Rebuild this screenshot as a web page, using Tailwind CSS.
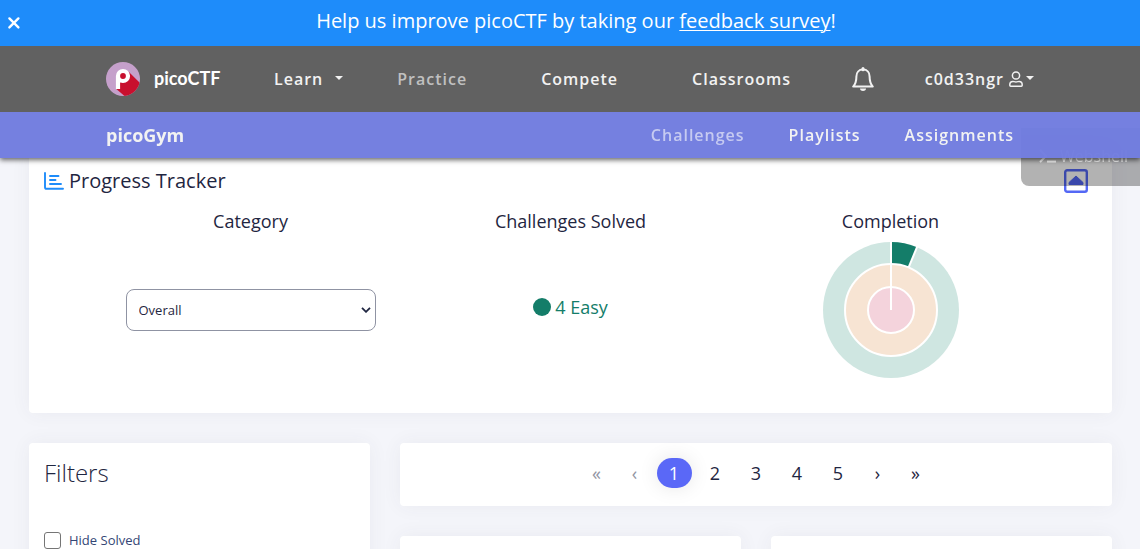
<!DOCTYPE html>
<html lang="en">
<head>
<meta charset="utf-8">
<meta name="viewport" content="width=device-width, initial-scale=1">
<title>picoGym - picoCTF</title>
<script src="https://cdn.jsdelivr.net/npm/@tailwindcss/browser@4"></script>
</head>
<body class="h-screen overflow-hidden bg-[#f4f5fa] font-['Open_Sans',sans-serif] text-[#1f2641]">

<header class="relative z-20 shadow-[0_2px_5px_rgba(0,0,0,0.6)]">
  <div class="relative flex h-[46px] items-center justify-center bg-[#1e8cfa] pb-1 pl-3 text-xl text-white">
    <button type="button" aria-label="Close" class="absolute top-4 left-[7px] size-[14px]">
      <svg viewBox="0 0 14 14" class="size-[14px]" fill="none" stroke="#fff" stroke-width="2.4" stroke-linecap="round"><path d="M2.4 2.4l9 9M11.4 2.4l-9 9"/></svg>
    </button>
    <p>Help us improve picoCTF by taking our <a href="#" class="underline decoration-1 underline-offset-2">feedback survey</a>!</p>
  </div>

  <nav aria-label="Main" class="bg-[#616161]">
    <div class="mx-auto flex h-[66px] max-w-[928px] items-center font-semibold tracking-[1px] text-[#f2f2f2]">
      <a href="#" class="flex w-[168px] items-center gap-[14px] tracking-normal">
        <svg viewBox="0 0 34 34" class="size-[34px] shrink-0">
          <defs><clipPath id="disc"><circle cx="17" cy="17" r="17"/></clipPath></defs>
          <circle cx="17" cy="17" r="17" fill="#c5a0cb"/>
          <path clip-path="url(#disc)" d="M22.4 9.4L40 27 28 42 10 26.8l4-6z" fill="#c8102e"/>
          <path d="M12 27V14.2" stroke="#fff" stroke-width="4.2" fill="none"/>
          <circle cx="17" cy="14" r="5" fill="#c8102e" stroke="#fff" stroke-width="4.2"/>
        </svg>
        <span class="pb-[2px] font-['Lato',sans-serif] text-lg font-bold text-white">picoCTF</span>
      </a>
      <button type="button" class="flex items-center gap-3 tracking-[1px]">Learn
        <svg viewBox="0 0 8 4" class="mb-[2px] h-1 w-2" fill="currentColor"><path d="M0 0h8L4 4z"/></svg>
      </button>
      <a href="#" class="ml-[54px] text-[#c0c0c0]">Practice</a>
      <a href="#" class="ml-[74px]">Compete</a>
      <a href="#" class="ml-[74px]">Classrooms</a>
      <button type="button" aria-label="Notifications" class="ml-auto">
        <svg viewBox="0 0 22 24" class="h-6 w-[22px]" fill="none" stroke="currentColor" stroke-width="2" stroke-linejoin="round"><path d="M11 2.6c-4.3 0-6.6 3-6.6 6.8 0 5-.8 7.4-3.2 10.2h19.6c-2.4-2.8-3.2-5.2-3.2-10.2 0-3.800-2.300-6.800-6.600-6.800z"/><path d="M11 1.500v1.300" stroke-width="3" stroke-linecap="round"/><path d="M8 21.500h6a3 2.400 0 0 1-6 0z" fill="currentColor" stroke="none"/></svg>
      </button>
      <button type="button" class="ml-[51px] flex items-center tracking-[1px]">c0d33ngr
        <svg viewBox="0 0 14 16" class="ml-[5px] h-4 w-[14px]" fill="none" stroke="currentColor" stroke-width="1.500"><circle cx="7" cy="4.500" r="3.600"/><path d="M.8 14.300v-.5c0-2.200 1.400-3.400 3-3.400 1 0 1.800.5 3.200.5s2.200-.5 3.200-.5c1.600 0 3 1.200 3 3.400v.5c0 .6-.4.9-.9.9H1.700c-.5 0-.9-.3-.9-.9z"/></svg>
        <svg viewBox="0 0 8 4" class="mb-[2px] ml-[3px] h-1 w-2" fill="currentColor"><path d="M0 0h8L4 4z"/></svg>
      </button>
    </div>
  </nav>

  <nav aria-label="Practice" class="bg-[#717cdf]/97">
    <div class="mx-auto flex h-[46px] max-w-[928px] items-center gap-11 pr-5 font-semibold tracking-[1px] text-[#f2f2f2]">
      <a href="#" class="mr-auto text-lg font-bold tracking-normal">picoGym</a>
      <a href="#" class="text-[#c6caf1]">Challenges</a>
      <a href="#">Playlists</a>
      <a href="#">Assignments</a>
    </div>
  </nav>
</header>

<button type="button" class="fixed top-[128px] right-0 z-10 flex h-[58px] w-[119px] items-center gap-1 rounded-bl-lg bg-black/30 pb-[2px] pl-[18px] text-white/90">
  <svg viewBox="0 0 17 14" class="h-[14px] w-[17px]" fill="none" stroke="currentColor" stroke-width="2"><path d="M1 1l6 6-6 6M8 12.500h9"/></svg>
  Webshell
</button>

<main class="-mt-2 pr-7 pl-[29px]">
  <section class="h-[263px] rounded bg-white px-[15px] pt-[17px] shadow-[0_0_20px_rgba(60,60,80,0.06)]">
    <div class="flex items-center justify-between pr-[9px]">
      <h2 class="flex items-center gap-[5px] text-xl">
        <svg viewBox="0 0 20 18" class="h-[18px] w-5" fill="none" stroke="#1e8cfa" stroke-width="1.900" stroke-linecap="round"><path d="M1 1v14.200q0 1.600 1.600 1.600H19M6 4h8.500M6 8h5.500M6 12h11"/></svg>
        Progress Tracker
      </h2>
      <button type="button" aria-label="Collapse progress tracker">
        <svg viewBox="0 0 24 24" class="size-6"><rect x="1.200" y="1.200" width="21.600" height="21.600" rx="2" fill="none" stroke="#5468f5" stroke-width="2.400"/><path d="M12 7L5 13.500v2h14v-2z" fill="#5468f5" stroke="#5468f5" stroke-linejoin="round"/></svg>
      </button>
    </div>
    <div class="mx-auto grid max-w-[960px] grid-cols-3 text-center text-lg">
      <div class="pt-3">
        <h3><label for="category">Category</label></h3>
        <div class="relative mx-auto mt-[54px] w-[250px]">
          <select id="category" class="block h-[42px] w-full appearance-none rounded-lg border border-[#8f93a3] bg-white pr-8 pl-3 text-[13px]"><option>Overall</option></select>
          <svg viewBox="0 0 10 6" class="pointer-events-none absolute top-[18px] right-[5px] h-[6px] w-[10px]" fill="none" stroke="#1f2641" stroke-width="1.800"><path d="M1 .8l4 4 4-4"/></svg>
        </div>
      </div>
      <div class="pt-3">
        <h3>Challenges Solved</h3>
        <p class="mt-[58px] flex items-center justify-center gap-1 text-[#147d69]"><span class="size-[18px] rounded-full bg-[#147d69]"></span>4 Easy</p>
      </div>
      <div class="pt-3">
        <h3>Completion</h3>
        <svg viewBox="0 0 138 138" class="mx-auto mt-[6px] size-[138px]" role="img" aria-label="Completion by difficulty">
          <circle cx="69" cy="69" r="68" fill="#cfe6e1"/>
          <path d="M69 69V1a68 68 0 0 1 26 5.200z" fill="#147d69"/>
          <path d="M69 69L95.400 5.200" stroke="#fff" stroke-width="2"/>
          <circle cx="69" cy="69" r="46" fill="#f7e4d3" stroke="#fff" stroke-width="2"/>
          <circle cx="69" cy="69" r="23" fill="#f4d3dc" stroke="#fff" stroke-width="2"/>
          <path d="M69 0v69" stroke="#fff" stroke-width="2"/>
        </svg>
      </div>
    </div>
  </section>

  <div class="mt-[30px] flex items-start gap-[30px]">
    <aside class="h-[400px] w-[341px] shrink-0 rounded bg-white px-[15px] pt-[14px] shadow-[0_0_20px_rgba(60,60,80,0.06)]">
      <h2 class="text-2xl font-light">Filters</h2>
      <label class="mt-[42px] flex items-center gap-2 text-[13px] text-[#344675]">
        <input type="checkbox" class="size-[17px] appearance-none rounded-[3px] border border-[#757575] bg-white">Hide Solved
      </label>
    </aside>
    <div class="min-w-0 flex-1">
      <nav aria-label="Pages" class="flex h-[63px] items-center justify-center gap-[6px] rounded bg-white pb-[3px] text-lg shadow-[0_0_20px_rgba(60,60,80,0.06)]">
        <button type="button" disabled class="h-[30px] w-8 text-[#9295a3]">«</button>
        <button type="button" disabled class="h-[30px] w-8 text-[#9295a3]">‹</button>
        <button type="button" aria-current="page" class="h-[30px] w-[35px] rounded-[15px] bg-[#5a68f7] text-white shadow-[0_0_20px_rgba(0,0,0,0.1)]">1</button>
        <button type="button" class="h-[30px] w-[35px]">2</button>
        <button type="button" class="h-[30px] w-[35px]">3</button>
        <button type="button" class="h-[30px] w-[35px]">4</button>
        <button type="button" class="h-[30px] w-[35px]">5</button>
        <button type="button" class="h-[30px] w-8">›</button>
        <button type="button" class="h-[30px] w-8">»</button>
      </nav>
      <div class="mt-[30px] grid grid-cols-2 gap-[30px]">
        <article class="h-[200px] rounded bg-white shadow-[0_0_20px_rgba(60,60,80,0.06)]"></article>
        <article class="h-[200px] rounded bg-white shadow-[0_0_20px_rgba(60,60,80,0.06)]"></article>
      </div>
    </div>
  </div>
</main>
</body>
</html>
